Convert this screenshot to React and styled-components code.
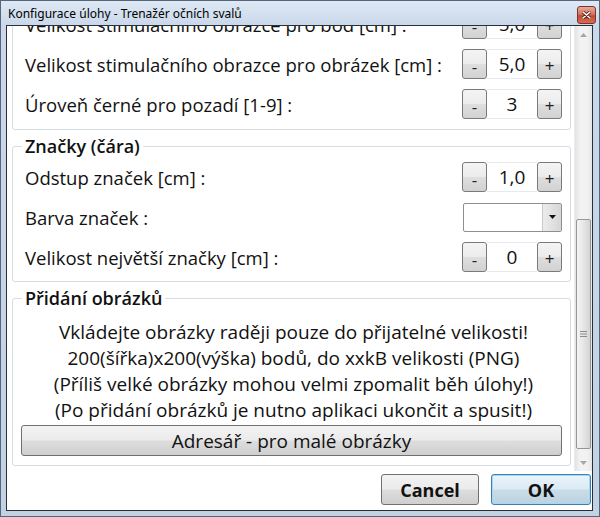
import React from 'react';
import styled, { createGlobalStyle } from 'styled-components';

const GlobalStyle = createGlobalStyle`
  html, body {
    margin: 0;
    padding: 0;
  }
  body {
    width: 600px;
    height: 517px;
    overflow: hidden;
    font-family: "Open Sans", "Noto Sans", sans-serif;
    color: #111;
  }
`;

const Window = styled.div`
  width: 600px;
  height: 517px;
  box-sizing: border-box;
  display: flex;
  flex-direction: column;
  border: 1px solid #56657a;
  padding: 0 6px 5px 5px;
  background: linear-gradient(#dfe9f5 0, #c9d8ea 24px, #c2d2e5 100%);
`;

const TitleBar = styled.div`
  height: 24px;
  margin: 0 -3px 0 2px;
  display: flex;
  align-items: center;
  justify-content: space-between;
  font-family: "Noto Sans", "Open Sans", sans-serif;
  font-size: 12px;
  color: #000;
`;

const CloseButton = styled.div`
  width: 19px;
  height: 18px;
  box-sizing: border-box;
  margin-top: 3px;
  border: 1px solid #7a3428;
  border-radius: 3px;
  background: linear-gradient(#e9a99b 0, #d47560 45%, #c24a35 55%, #d96b4f 100%);
  display: flex;
  align-items: center;
  justify-content: center;
`;

const Client = styled.div`
  flex: 1;
  min-height: 0;
  display: flex;
  flex-direction: column;
  border: 1px solid #2a2f36;
  background: #fff;
`;

const Body = styled.div`
  flex: 1;
  min-height: 0;
  display: flex;
`;

const Viewport = styled.div`
  flex: 1;
  min-width: 0;
  overflow: hidden;
  padding: 0 3px 0 5px;
`;

const Content = styled.div`
  margin-top: ${p => p.$offset}px;
  display: flex;
  flex-direction: column;
  gap: 7px;
`;

const Group = styled.fieldset`
  margin: 0;
  min-width: 0;
  padding: 0 8px ${p => p.$pb}px 12px;
  border: 1px solid #d5dde4;
  border-radius: 3px;
`;

const Legend = styled.legend`
  padding: 0 3px;
  margin-left: -3px;
  font-size: 18px;
  font-weight: 600;
  line-height: 18px;
  color: #111;
`;

const Row = styled.div`
  height: 40px;
  display: flex;
  align-items: center;
  justify-content: space-between;
  padding-top: ${p => (p.$first ? 2 : 0)}px;
`;

const Label = styled.span`
  font-size: 18.5px;
  white-space: nowrap;
`;

const Spinner = styled.div`
  display: flex;
  height: 30px;
`;

const SpinButton = styled.div`
  width: 25px;
  height: 30px;
  box-sizing: border-box;
  border: 1px solid #7a7a7a;
  border-radius: 3px;
  background: linear-gradient(#f4f4f4 0, #ececec 48%, #dedede 52%, #d2d2d2 100%);
  display: flex;
  align-items: center;
  justify-content: center;
  font-size: 17px;
  padding-top: ${p => (p.$minus ? 4 : 2)}px;
  color: #222;
`;

const SpinValue = styled.div`
  width: 50px;
  box-sizing: border-box;
  border-top: 1px solid #e6ebef;
  border-bottom: 1px solid #e6ebef;
  display: flex;
  align-items: center;
  justify-content: center;
  font-size: 19px;
`;

const Combo = styled.div`
  width: 99px;
  height: 29px;
  box-sizing: border-box;
  border: 1px solid #8f8f8f;
  border-radius: 2px;
  display: flex;
  justify-content: flex-end;
  background: #fff;
`;

const ComboArrow = styled.div`
  width: 18px;
  border-left: 1px solid #c8c8c8;
  background: linear-gradient(90deg, #ececec, #d6d6d6);
  display: flex;
  align-items: center;
  justify-content: center;
`;

const Info = styled.div`
  padding-top: 12px;
  text-align: center;
  font-size: 19px;
  line-height: 26px;
`;

const WideButton = styled.div`
  margin: 2px 0 0 -4px;
  height: 31px;
  box-sizing: border-box;
  border: 1px solid #707070;
  border-radius: 3px;
  background: linear-gradient(#f3f3f3 0, #ebebeb 48%, #dddddd 52%, #cfcfcf 100%);
  display: flex;
  align-items: center;
  justify-content: center;
  font-size: 19px;
`;

const Scrollbar = styled.div`
  width: 17px;
  display: flex;
  flex-direction: column;
  background: linear-gradient(90deg, #e3e3e3, #f2f2f2 30%, #f2f2f2 70%, #e6e6e6);
  border-left: 1px solid #ececec;
`;

const ScrollArrow = styled.div`
  height: 17px;
  display: flex;
  align-items: center;
  justify-content: center;
`;

const Track = styled.div`
  flex: 1;
  position: relative;
`;

const Thumb = styled.div`
  position: absolute;
  left: 1px;
  right: 1px;
  box-sizing: border-box;
  border: 1px solid #979797;
  border-radius: 2px;
  background: linear-gradient(90deg, #f4f4f4, #e6e6e6 50%, #d4d4d4);
  display: flex;
  align-items: center;
  justify-content: center;
`;

const Footer = styled.div`
  height: 39px;
  box-sizing: border-box;
  padding: 3px 1px 0 0;
  display: flex;
  justify-content: flex-end;
  gap: 12px;
`;

const DialogButton = styled.div`
  width: ${p => p.$w}px;
  height: 31px;
  box-sizing: border-box;
  border: 1px solid ${p => (p.$default ? '#3c7fb1' : '#707070')};
  border-radius: 3px;
  background: ${p => (p.$default
    ? 'linear-gradient(#eaf4fa 0, #dceaf3 48%, #c9dce8 52%, #bcd2e0 100%)'
    : 'linear-gradient(#f3f3f3 0, #ebebeb 48%, #dddddd 52%, #cfcfcf 100%)')};
  box-shadow: ${p => (p.$default ? 'inset 0 0 0 1px #a8d8f0' : 'none')};
  display: flex;
  align-items: center;
  justify-content: center;
  font-size: 18px;
  font-weight: 700;
`;

const NumberField = ({ value }) => (
  <Spinner>
    <SpinButton $minus>-</SpinButton>
    <SpinValue>{value}</SpinValue>
    <SpinButton>+</SpinButton>
  </Spinner>
);

const Triangle = ({ up }) => (
  <svg width="7" height="4" viewBox="0 0 7 4">
    <path d={up ? 'M0 4 L3.5 0 L7 4 Z' : 'M0 0 L3.5 4 L7 0 Z'} fill="#a6a6a6" />
  </svg>
);

export default function App() {
  return (
    <>
      <GlobalStyle />
      <Window>
        <TitleBar>
          <span>Konfigurace úlohy - Trenažér očních svalů</span>
          <CloseButton>
            <svg width="9" height="8" viewBox="0 0 9 8">
              <path d="M1 1 L8 7 M8 1 L1 7" stroke="#5a1d14" strokeWidth="3" strokeLinecap="round" />
              <path d="M1 1 L8 7 M8 1 L1 7" stroke="#fff" strokeWidth="1.6" strokeLinecap="round" />
            </svg>
          </CloseButton>
        </TitleBar>
        <Client>
          <Body>
            <Viewport>
              <Content $offset={-23}>
                <Group $pb={5}>
                  <Row>
                    <Label>Velikost stimulačního obrazce pro bod [cm] :</Label>
                    <NumberField value="5,0" />
                  </Row>
                  <Row>
                    <Label>Velikost stimulačního obrazce pro obrázek [cm] :</Label>
                    <NumberField value="5,0" />
                  </Row>
                  <Row>
                    <Label>Úroveň černé pro pozadí [1-9] :</Label>
                    <NumberField value="3" />
                  </Row>
                </Group>
                <Group $pb={4}>
                  <Legend>Značky (čára)</Legend>
                  <Row $first>
                    <Label>Odstup značek [cm] :</Label>
                    <NumberField value="1,0" />
                  </Row>
                  <Row>
                    <Label>Barva značek :</Label>
                    <Combo>
                      <ComboArrow>
                        <svg width="7" height="4" viewBox="0 0 7 4">
                          <path d="M0 0 L3.5 4 L7 0 Z" fill="#111" />
                        </svg>
                      </ComboArrow>
                    </Combo>
                  </Row>
                  <Row>
                    <Label>Velikost největší značky [cm] :</Label>
                    <NumberField value="0" />
                  </Row>
                </Group>
                <Group $pb={9}>
                  <Legend>Přidání obrázků</Legend>
                  <Info>
                    Vkládejte obrázky raději pouze do přijatelné velikosti!<br />
                    200(šířka)x200(výška) bodů, do xxkB velikosti (PNG)<br />
                    (Příliš velké obrázky mohou velmi zpomalit běh úlohy!)<br />
                    (Po přidání obrázků je nutno aplikaci ukončit a spusit!)
                  </Info>
                  <WideButton>Adresář - pro malé obrázky</WideButton>
                </Group>
              </Content>
            </Viewport>
            <Scrollbar>
              <ScrollArrow><Triangle up /></ScrollArrow>
              <Track>
                <Thumb style={{ top: 176, height: 230 }}>
                  <svg width="7" height="8" viewBox="0 0 7 8">
                    <path d="M0 1.5 H7 M0 4 H7 M0 6.5 H7" stroke="#8a8a8a" strokeWidth="1" />
                  </svg>
                </Thumb>
              </Track>
              <ScrollArrow><Triangle /></ScrollArrow>
            </Scrollbar>
          </Body>
          <Footer>
            <DialogButton $w={98}>Cancel</DialogButton>
            <DialogButton $w={100} $default>OK</DialogButton>
          </Footer>
        </Client>
      </Window>
    </>
  );
}
